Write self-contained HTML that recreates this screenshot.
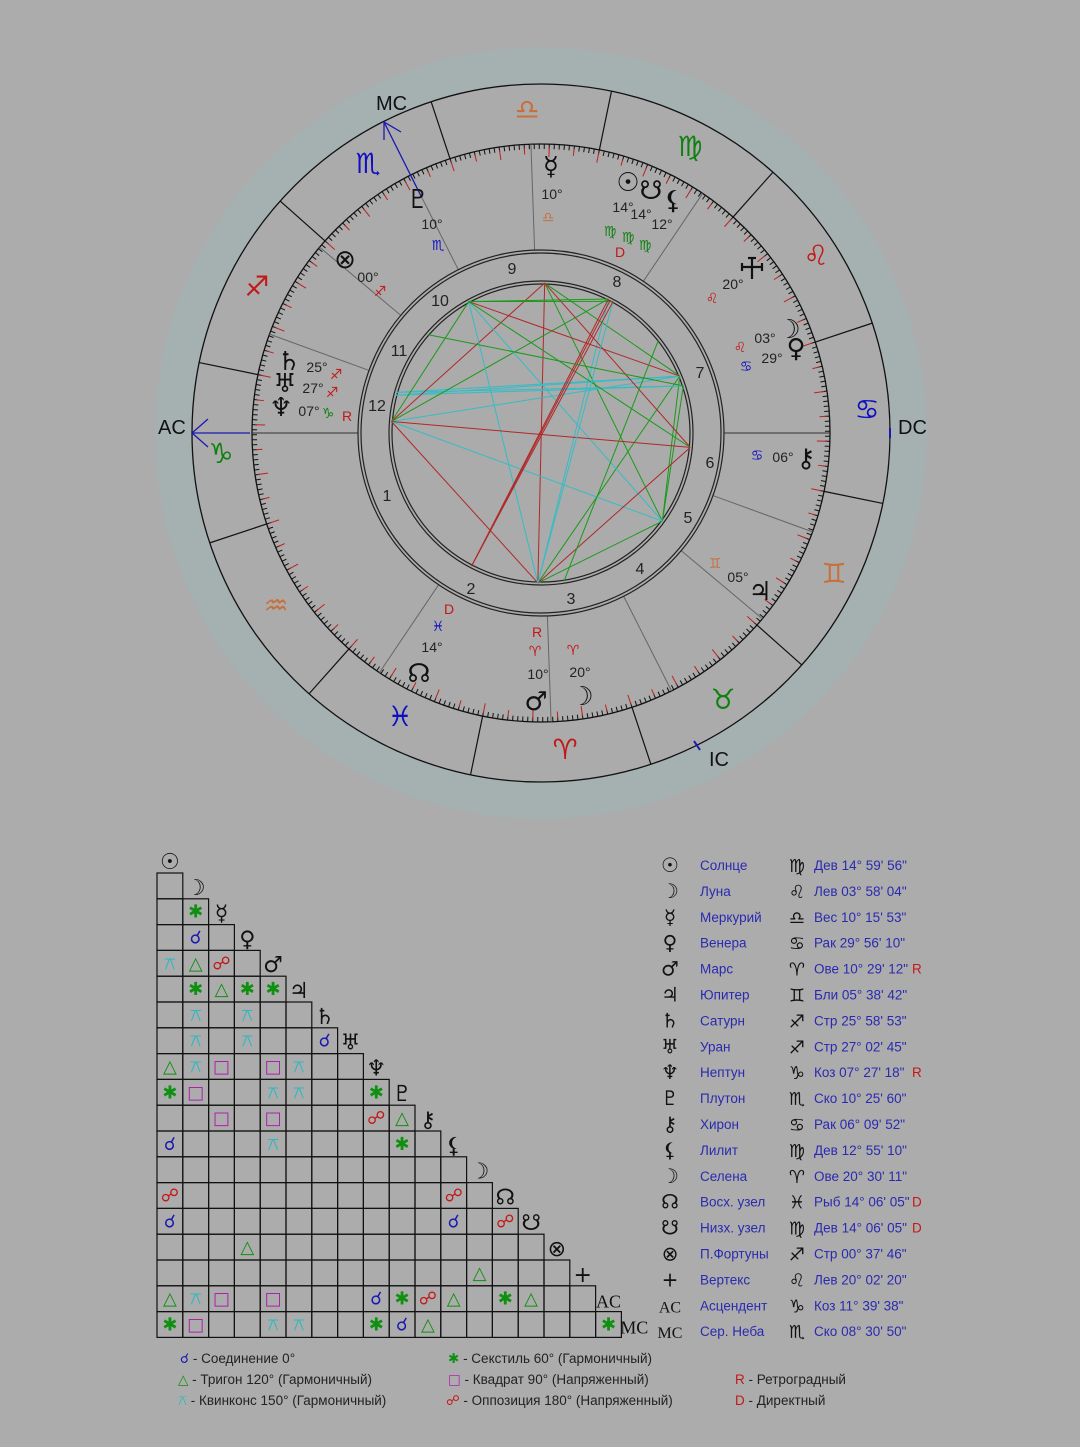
<!DOCTYPE html>
<html><head><meta charset="utf-8">
<style>
html,body{margin:0;padding:0;background:#acacac;}
body{width:1080px;height:1447px;overflow:hidden;position:relative;font-family:"Liberation Sans","DejaVu Sans",sans-serif;}
svg{position:absolute;left:0;top:0;}
.g{font-family:"DejaVu Sans",sans-serif;}
</style></head><body>
<svg id="s" width="1080" height="1447" viewBox="0 0 1080 1447" xmlns="http://www.w3.org/2000/svg">
<rect x="0" y="0" width="1080" height="1447" fill="#acacac"/>
<circle cx="541" cy="433" r="386" fill="#a5b0b0"/>
<circle cx="541" cy="433" r="349" fill="#ababab" stroke="#111" stroke-width="1.3"/>
<circle cx="541" cy="433" r="289" fill="none" stroke="#111" stroke-width="1.3"/>
<g id="dyn"></g>
<circle cx="541" cy="433" r="183" fill="none" stroke="#222" stroke-width="1.2"/>
<circle cx="541" cy="433" r="180" fill="none" stroke="#222" stroke-width="1.2"/>
<circle cx="541" cy="433" r="152" fill="none" stroke="#222" stroke-width="1.2"/>
<circle cx="541" cy="433" r="149" fill="none" stroke="#222" stroke-width="1.2"/>
<g id="asp"></g>

<line x1="192" y1="433" x2="250" y2="433" stroke="#1a1ab0" stroke-width="1.3"/>
<polyline points="208,419 192,433 208,447" fill="none" stroke="#1a1ab0" stroke-width="1.3"/>
<line x1="384" y1="122" x2="421" y2="196" stroke="#1a1ab0" stroke-width="1.3"/>
<polyline points="384,140 384,122 401,132" fill="none" stroke="#1a1ab0" stroke-width="1.3"/>
<line x1="890" y1="428" x2="890" y2="438" stroke="#1a1ab0" stroke-width="2"/>
<line x1="694" y1="741" x2="700" y2="750" stroke="#1a1ab0" stroke-width="2"/>
<g font-size="20" fill="#111">
<text x="376" y="110">MC</text>
<text x="158" y="434">AC</text>
<text x="898" y="434">DC</text>
<text x="709" y="766">IC</text>
</g>

<g font-size="16" fill="#222" text-anchor="middle">
<text x="512" y="274">9</text><text x="617" y="287">8</text><text x="440" y="306">10</text>
<text x="399" y="356">11</text><text x="377" y="411">12</text><text x="700" y="378">7</text>
<text x="710" y="468">6</text><text x="688" y="523">5</text><text x="640" y="574">4</text>
<text x="571" y="604">3</text><text x="471" y="594">2</text><text x="387" y="501">1</text>
</g>

<g class="g" font-size="28" font-weight="bold" text-anchor="middle">
<text x="527" y="119" fill="#c8703c">♎&#xFE0E;</text>
<text x="690" y="156" fill="#108010">♍&#xFE0E;</text>
<text x="816" y="265" fill="#c41818">♌&#xFE0E;</text>
<text x="867" y="419" fill="#1010c0">♋&#xFE0E;</text>
<text x="834" y="583" fill="#c8703c">♊&#xFE0E;</text>
<text x="723" y="709" fill="#108010">♉&#xFE0E;</text>
<text x="565" y="759" fill="#c41818">♈&#xFE0E;</text>
<text x="400" y="726" fill="#1010c0">♓&#xFE0E;</text>
<text x="276" y="615" fill="#c8703c">♒&#xFE0E;</text>
<text x="221" y="463" fill="#108010">♑&#xFE0E;</text>
<text x="257" y="296" fill="#c41818">♐&#xFE0E;</text>
<text x="368" y="173" fill="#1010c0">♏&#xFE0E;</text>
</g>

<g class="g" font-size="26" fill="#111" text-anchor="middle">
<text x="551" y="175">☿&#xFE0E;</text>
<text x="418" y="208">♇&#xFE0E;</text>
<text x="628" y="191">☉&#xFE0E;</text>
<text x="651" y="199">☋&#xFE0E;</text>
<text x="673" y="209">⚸&#xFE0E;</text>
<text x="345" y="268">⊗</text>
<text x="789" y="338">☽&#xFE0E;</text>
<text x="796" y="357">♀&#xFE0E;</text>
<text x="289" y="370">♄&#xFE0E;</text>
<text x="285" y="392">♅&#xFE0E;</text>
<text x="281" y="416">♆&#xFE0E;</text>
<text x="806" y="467">⚷&#xFE0E;</text>
<text x="760" y="600">♃&#xFE0E;</text>
<text x="419" y="682">☊&#xFE0E;</text>
<text x="536" y="710">♂&#xFE0E;</text>
<text x="582" y="705">☽&#xFE0E;</text>
</g>
<g stroke="#111" stroke-width="2.2" fill="none">
<line x1="752" y1="258" x2="752" y2="279"/><line x1="742" y1="267" x2="762" y2="267"/>
<line x1="742" y1="263" x2="742" y2="271"/><line x1="762" y1="263" x2="762" y2="271"/><line x1="748" y1="258" x2="756" y2="258"/>
</g>
<g font-size="14" fill="#222" text-anchor="middle">
<text x="552" y="199">10°</text><text x="432" y="229">10°</text>
<text x="623" y="212">14°</text><text x="641" y="219">14°</text><text x="662" y="229">12°</text>
<text x="368" y="282">00°</text><text x="733" y="289">20°</text>
<text x="765" y="343">03°</text><text x="772" y="363">29°</text>
<text x="317" y="372">25°</text><text x="313" y="393">27°</text><text x="309" y="416">07°</text>
<text x="783" y="462">06°</text><text x="738" y="582">05°</text>
<text x="432" y="652">14°</text><text x="538" y="679">10°</text><text x="580" y="677">20°</text>
</g>
<g class="g" font-size="14" text-anchor="middle">
<text x="548" y="222" fill="#c8703c">♎&#xFE0E;</text>
<text x="438" y="250" fill="#1010c0">♏&#xFE0E;</text>
<text x="610" y="236" fill="#108010">♍&#xFE0E;</text><text x="628" y="242" fill="#108010">♍&#xFE0E;</text><text x="645" y="250" fill="#108010">♍&#xFE0E;</text>
<text x="380" y="296" fill="#c41818">♐&#xFE0E;</text>
<text x="712" y="303" fill="#c41818">♌&#xFE0E;</text>
<text x="740" y="352" fill="#c41818">♌&#xFE0E;</text><text x="746" y="371" fill="#1010c0">♋&#xFE0E;</text>
<text x="336" y="379" fill="#c41818">♐&#xFE0E;</text><text x="332" y="397" fill="#c41818">♐&#xFE0E;</text><text x="328" y="418" fill="#108010">♑&#xFE0E;</text>
<text x="757" y="460" fill="#1010c0">♋&#xFE0E;</text>
<text x="715" y="568" fill="#c8703c">♊&#xFE0E;</text>
<text x="438" y="631" fill="#1010c0">♓&#xFE0E;</text>
<text x="535" y="656" fill="#c41818">♈&#xFE0E;</text><text x="573" y="655" fill="#c41818">♈&#xFE0E;</text>
</g>
<g font-size="14" fill="#c41818" text-anchor="middle">
<text x="620" y="257">D</text><text x="347" y="421">R</text><text x="449" y="614">D</text><text x="537" y="637">R</text>
</g>

<g id="grid"></g>
<g id="list"></g>

<g font-size="13.5" fill="#222">
<text x="180" y="1363"><tspan class="g" fill="#1a1ab0">☌&#xFE0E;</tspan> - Соединение 0°</text>
<text x="178" y="1384"><tspan class="g" fill="#109010">△</tspan> - Тригон 120° (Гармоничный)</text>
<text x="178" y="1405"><tspan class="g" fill="#30b8c0">⚻&#xFE0E;</tspan> - Квинконс 150° (Гармоничный)</text>
<text x="448" y="1363"><tspan class="g" fill="#109010">✱</tspan> - Секстиль 60° (Гармоничный)</text>
<text x="448" y="1384"><tspan class="g" fill="#b020b0">□</tspan> - Квадрат 90° (Напряженный)</text>
<text x="446" y="1405"><tspan class="g" fill="#c41818">☍&#xFE0E;</tspan> - Оппозиция 180° (Напряженный)</text>
<text x="735" y="1384"><tspan fill="#c41818">R</tspan> - Ретроградный</text>
<text x="735" y="1405"><tspan fill="#c41818">D</tspan> - Директный</text>
</g>
</svg>
<script>
(function(){
var NS="http://www.w3.org/2000/svg",cx=541,cy=433;
function el(t,a,p){var e=document.createElementNS(NS,t);for(var k in a)e.setAttribute(k,a[k]);p.appendChild(e);return e;}
function P(a,r){var t=a*Math.PI/180;return [cx+r*Math.cos(t),cy-r*Math.sin(t)];}
var d=document.getElementById('dyn');
for(var L=0;L<360;L+=30){var a=L-101.65,p1=P(a,289),p2=P(a,349);el('line',{x1:p1[0],y1:p1[1],x2:p2[0],y2:p2[1],stroke:'#111','stroke-width':1.2},d);}
for(var L=0;L<360;L++){var a=L-101.65;var p1=P(a,289),p2=P(a,284);el('line',{x1:p1[0],y1:p1[1],x2:p2[0],y2:p2[1],stroke:'#111','stroke-width':1},d);
 if(L%5==0){var q1=P(a,286),q2=P(a,L%10==0?276:279);el('line',{x1:q1[0],y1:q1[1],x2:q2[0],y2:q2[1],stroke:'#c02020','stroke-width':1},d);}}
var H=[180,236,272,296.85,320,340,0,56,92,116.85,140,160];
H.forEach(function(a){var p1=P(a,183),p2=P(a,289);el('line',{x1:p1[0],y1:p1[1],x2:p2[0],y2:p2[1],stroke:(a==180||a==0)?'#333':'#666','stroke-width':1},d);});
var ang=[63.3,22.3,88.6,18.3,268.8,324,164.3,165.4,175.6,118.8,-5.5,61.3,-81.2,242.45,62.45,139,38.4,180,116.85];
var C={c:'#1a1ab0',s:'#109010',t:'#109010',q:'#30b8c0',x:'#b020b0',o:'#c41818'};
var LC={s:'#1a9a1a',t:'#1a9a1a',q:'#35bcc4',x:'#b02828',o:'#b02828'};
var A={1:{},2:{1:'s'},3:{1:'c'},4:{0:'q',1:'t',2:'o'},5:{1:'s',2:'t',3:'s',4:'s'},6:{1:'q',3:'q'},7:{1:'q',3:'q',6:'c'},
8:{0:'t',1:'q',2:'x',4:'x',5:'q'},9:{0:'s',1:'x',4:'q',5:'q',8:'s'},10:{2:'x',4:'x',8:'o',9:'t'},11:{0:'c',4:'q',9:'s'},12:{},
13:{0:'o',11:'o'},14:{0:'c',11:'c',13:'o'},15:{3:'t'},16:{12:'t'},
17:{0:'t',1:'q',2:'x',4:'x',8:'c',9:'s',10:'o',11:'t',13:'s',14:'t'},18:{0:'s',1:'x',4:'q',5:'q',8:'s',9:'c',10:'t',17:'s'}};
var ag=document.getElementById('asp');
for(var r=1;r<=16;r++)for(var c in A[r]){var k=A[r][c];if(k=='c')continue;var p1=P(ang[r],150),p2=P(ang[c],150);
 el('line',{x1:p1[0],y1:p1[1],x2:p2[0],y2:p2[1],stroke:LC[k],'stroke-width':1},ag);}
var g=document.getElementById('grid'),x0=157,y0=873,w=25.8;
var gl=['☉','☽','☿','♀','♂','♃','♄','♅','♆','♇','⚷','⚸','☽','☊','☋','⊗','+','AC','MC'];
var SY={c:'☌\uFE0E',s:'✱',t:'△',q:'⚻\uFE0E',x:'□',o:'☍\uFE0E'};
for(var r=1;r<=18;r++){for(var c=0;c<r;c++){var x=x0+c*w,y=y0+(r-1)*w;el('rect',{x:x,y:y,width:w,height:w,fill:'none',stroke:'#111','stroke-width':1.2},g);
 var k=A[r][c];if(k){var t=el('text',{x:x+w/2,y:y+w/2+6,'text-anchor':'middle','font-size':18,fill:C[k],'class':'g'},g);t.textContent=SY[k];}}}
for(var i=0;i<19;i++){var x=x0+i*w+w/2,y=y0+i*w-4;
 var t=el('text',{x:x,y:y,'text-anchor':'middle','font-size':i>=17?18:22,fill:'#111','class':i>=17?'':'g','font-family':i>=17?'Liberation Serif,serif':''},g);
 t.textContent=gl[i]+(i<17&&i!=15&&i!=16?'\uFE0E':'');}
var lg=document.getElementById('list');
var L=[['☉','Солнце','♍','Дев 14° 59\' 56"',''],['☽','Луна','♌','Лев 03° 58\' 04"',''],['☿','Меркурий','♎','Вес 10° 15\' 53"',''],
['♀','Венера','♋','Рак 29° 56\' 10"',''],['♂','Марс','♈','Ове 10° 29\' 12"','R'],['♃','Юпитер','♊','Бли 05° 38\' 42"',''],
['♄','Сатурн','♐','Стр 25° 58\' 53"',''],['♅','Уран','♐','Стр 27° 02\' 45"',''],['♆','Нептун','♑','Коз 07° 27\' 18"','R'],
['♇','Плутон','♏','Ско 10° 25\' 60"',''],['⚷','Хирон','♋','Рак 06° 09\' 52"',''],['⚸','Лилит','♍','Дев 12° 55\' 10"',''],
['☽','Селена','♈','Ове 20° 30\' 11"',''],['☊','Восх. узел','♓','Рыб 14° 06\' 05"','D'],['☋','Низх. узел','♍','Дев 14° 06\' 05"','D'],
['⊗','П.Фортуны','♐','Стр 00° 37\' 46"',''],['+','Вертекс','♌','Лев 20° 02\' 20"',''],['AC','Асцендент','♑','Коз 11° 39\' 38"',''],['MC','Сер. Неба','♏','Ско 08° 30\' 50"','']];
L.forEach(function(v,i){var y=870+i*25.9;
 var t=el('text',{x:670,y:y+2,'text-anchor':'middle','font-size':(v[0].length>1?16:20),fill:'#111','class':v[0].length>1?'':'g','font-family':v[0].length>1?'Liberation Serif,serif':''},lg);t.textContent=v[0]+(v[0].length==1&&v[0]!='⊗'&&v[0]!='+'?'\uFE0E':'');
 t=el('text',{x:700,y:y,'font-size':13.5,fill:'#2a2ab0'},lg);t.textContent=v[1];
 t=el('text',{x:797,y:y+2,'text-anchor':'middle','font-size':18,fill:'#111','class':'g'},lg);t.textContent=v[2]+'\uFE0E';
 t=el('text',{x:814,y:y,'font-size':13.5,fill:'#2a2ab0'},lg);t.textContent=v[3];
 if(v[4]){t=el('text',{x:912,y:y,'font-size':13.5,fill:'#c41818'},lg);t.textContent=v[4];}
});
})();
</script>
</body></html>
